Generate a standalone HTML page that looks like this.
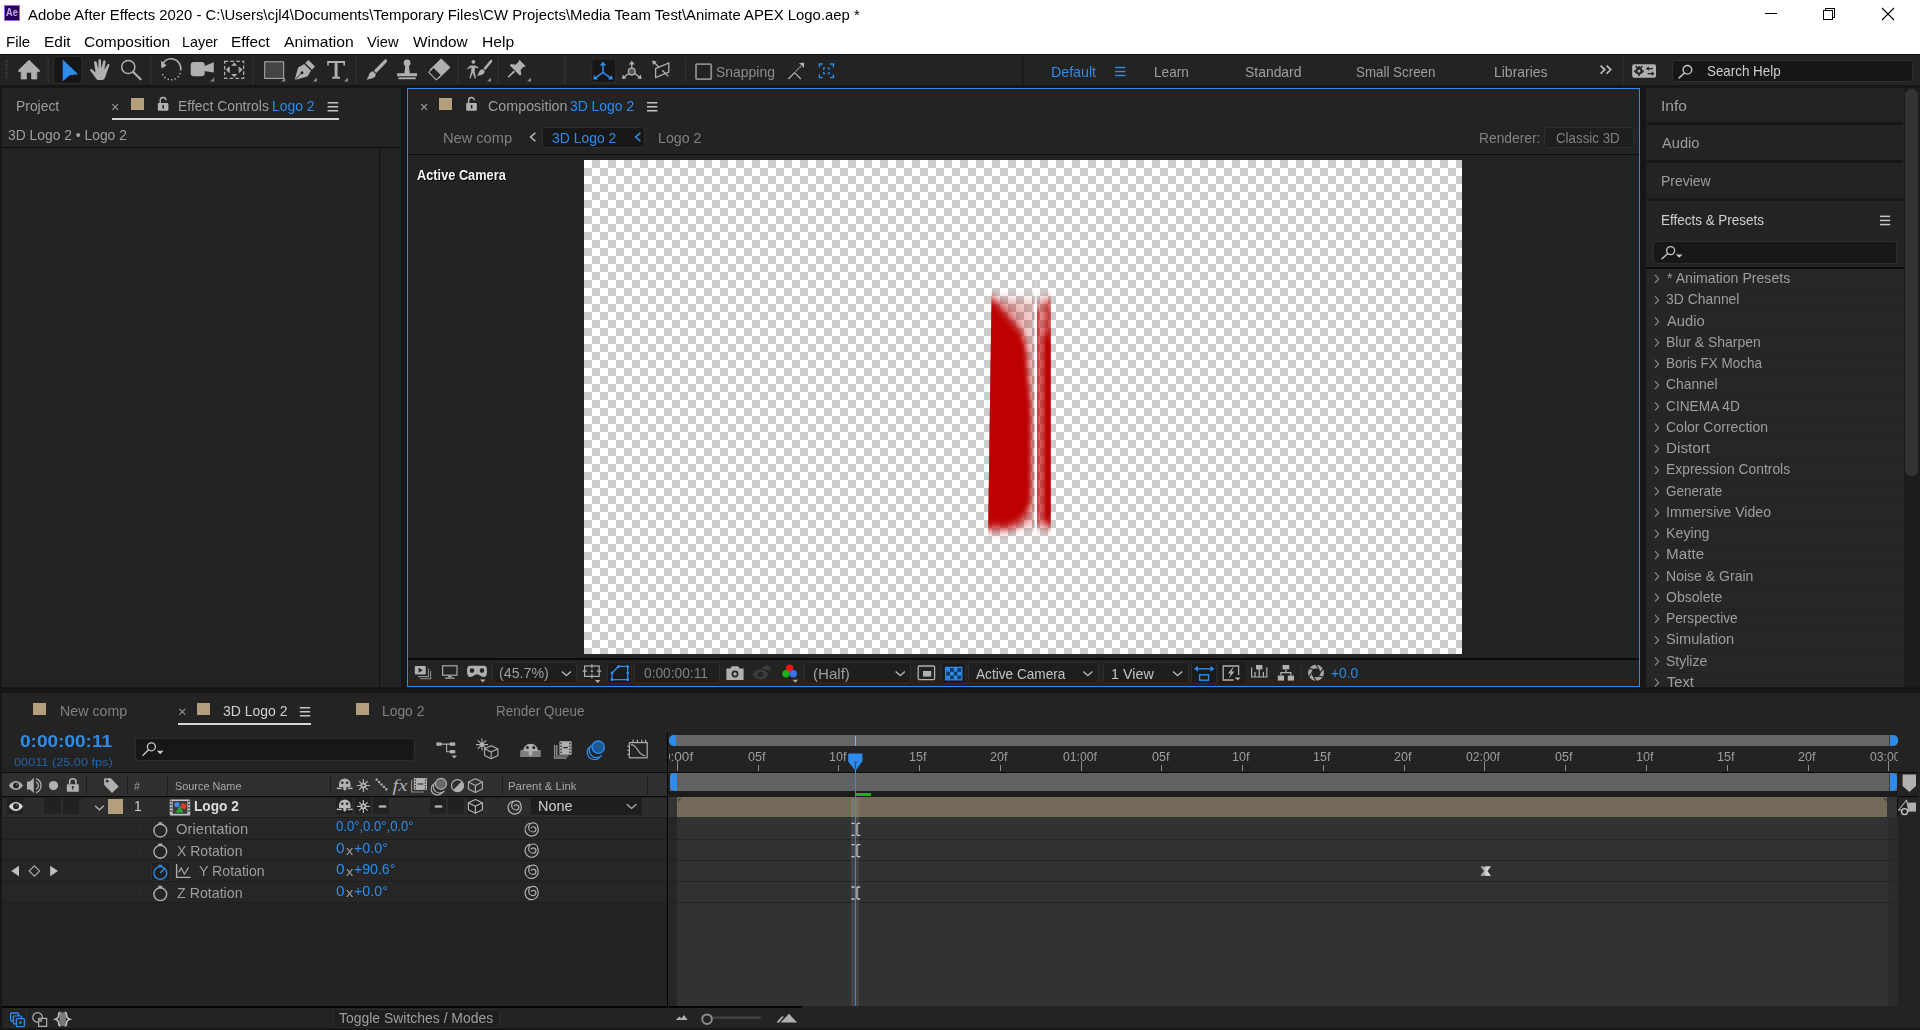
<!DOCTYPE html>
<html><head><meta charset="utf-8"><title>Adobe After Effects 2020</title>
<style>
html,body{margin:0;padding:0;}
body{width:1920px;height:1030px;overflow:hidden;background:#161616;font-family:"Liberation Sans",sans-serif;position:relative;}
#r div,#r span{position:absolute;box-sizing:border-box;}
#r{position:absolute;left:0;top:0;width:1920px;height:1030px;overflow:hidden;}
.t{white-space:nowrap;transform-origin:0 0;}
svg.ov{position:absolute;left:0;top:0;}
</style></head><body>
<div id="r">
<div style="left:0px;top:0px;width:1920px;height:54px;background:#ffffff;"></div>
<div style="left:0px;top:54px;width:1920px;height:1px;background:#101010;"></div>
<div style="left:4px;top:5.2px;width:16.3px;height:15.6px;background:#26084a;border:1px solid #9d62e6;"></div>
<span class="t" style="left:6.07px;top:7.80px;font-size:10.4px;line-height:10.4px;color:#cfa4ff;font-weight:bold;transform:scaleX(0.8864);">Ae</span>
<span class="t" style="left:27.50px;top:7.10px;font-size:15px;line-height:15px;color:#000;transform:scaleX(0.9917);">Adobe After Effects 2020 - C:\Users\cjl4\Documents\Temporary Files\CW Projects\Media Team Test\Animate APEX Logo.aep *</span>
<span class="t" style="left:6.30px;top:33.80px;font-size:15px;line-height:15px;color:#000;transform:scaleX(0.9989);">File</span>
<span class="t" style="left:43.51px;top:33.80px;font-size:15px;line-height:15px;color:#000;transform:scaleX(1.0296);">Edit</span>
<span class="t" style="left:83.62px;top:33.80px;font-size:15px;line-height:15px;color:#000;transform:scaleX(1.0337);">Composition</span>
<span class="t" style="left:182.35px;top:33.80px;font-size:15px;line-height:15px;color:#000;transform:scaleX(0.9563);">Layer</span>
<span class="t" style="left:231.08px;top:33.80px;font-size:15px;line-height:15px;color:#000;transform:scaleX(1.0204);">Effect</span>
<span class="t" style="left:284.40px;top:33.80px;font-size:15px;line-height:15px;color:#000;transform:scaleX(1.0441);">Animation</span>
<span class="t" style="left:367.43px;top:33.80px;font-size:15px;line-height:15px;color:#000;transform:scaleX(0.9790);">View</span>
<span class="t" style="left:413.42px;top:33.80px;font-size:15px;line-height:15px;color:#000;transform:scaleX(1.0220);">Window</span>
<span class="t" style="left:481.75px;top:33.80px;font-size:15px;line-height:15px;color:#000;transform:scaleX(1.0439);">Help</span>
<div style="left:0px;top:55px;width:1920px;height:30px;background:#232323;"></div>
<span class="t" style="left:715.67px;top:64.54px;font-size:14.6px;line-height:14.6px;color:#8c8c8c;transform:scaleX(0.9562);">Snapping</span>
<span class="t" style="left:1051.36px;top:64.64px;font-size:14.6px;line-height:14.6px;color:#2d8ceb;transform:scaleX(0.9740);">Default</span>
<span class="t" style="left:1153.61px;top:64.64px;font-size:14.6px;line-height:14.6px;color:#9e9e9e;transform:scaleX(0.9322);">Learn</span>
<span class="t" style="left:1245.17px;top:64.64px;font-size:14.6px;line-height:14.6px;color:#9e9e9e;transform:scaleX(0.9537);">Standard</span>
<span class="t" style="left:1356.10px;top:64.64px;font-size:14.6px;line-height:14.6px;color:#9e9e9e;transform:scaleX(0.9156);">Small Screen</span>
<span class="t" style="left:1493.58px;top:64.64px;font-size:14.6px;line-height:14.6px;color:#9e9e9e;transform:scaleX(0.9574);">Libraries</span>
<div style="left:1672px;top:59.6px;width:240.5px;height:22.2px;background:#161616;border:1px solid #2e2e2e;border-radius:3px;"></div>
<span class="t" style="left:1706.60px;top:64.34px;font-size:14.6px;line-height:14.6px;color:#cfcfcf;transform:scaleX(0.9170);">Search Help</span>
<div style="left:2px;top:88px;width:399px;height:599px;background:#232323;"></div>
<div style="left:2px;top:147px;width:398px;height:1px;background:#0c0c0c;"></div>
<div style="left:379px;top:148px;width:1px;height:539px;background:#121212;"></div>
<span class="t" style="left:16.39px;top:98.64px;font-size:14.6px;line-height:14.6px;color:#9e9e9e;transform:scaleX(0.9510);">Project</span>
<div style="left:131px;top:98px;width:12.5px;height:12px;background:#b39f7d;"></div>
<span class="t" style="left:177.89px;top:98.64px;font-size:14.6px;line-height:14.6px;color:#9e9e9e;transform:scaleX(0.9520);">Effect Controls</span>
<span class="t" style="left:272.19px;top:98.64px;font-size:14.6px;line-height:14.6px;color:#2d8ceb;transform:scaleX(0.9514);">Logo 2</span>
<div style="left:112px;top:118px;width:227px;height:2px;background:#d6d6d6;"></div>
<span class="t" style="left:7.75px;top:128.34px;font-size:14.6px;line-height:14.6px;color:#9e9e9e;transform:scaleX(0.9495);">3D Logo 2 • Logo 2</span>
<div style="left:407px;top:88px;width:1233px;height:599px;background:#232323;border:1px solid #2d8ceb;"></div>
<div style="left:408px;top:154px;width:1231px;height:1px;background:#0e0e0e;"></div>
<div style="left:408px;top:658px;width:1231px;height:1.5px;background:#0a0a0a;"></div>
<div style="left:439px;top:98px;width:13.3px;height:12px;background:#b39f7d;"></div>
<span class="t" style="left:487.98px;top:98.64px;font-size:14.6px;line-height:14.6px;color:#9e9e9e;transform:scaleX(0.9796);">Composition</span>
<span class="t" style="left:569.74px;top:98.64px;font-size:14.6px;line-height:14.6px;color:#2d8ceb;transform:scaleX(0.9521);">3D Logo 2</span>
<span class="t" style="left:442.53px;top:130.64px;font-size:14.6px;line-height:14.6px;color:#818181;transform:scaleX(1.0010);">New comp</span>
<div style="left:541.5px;top:126.5px;width:103.5px;height:21px;background:#171717;border:1px solid #2d2d2d;border-radius:3px;"></div>
<span class="t" style="left:551.74px;top:130.64px;font-size:14.6px;line-height:14.6px;color:#2d8ceb;transform:scaleX(0.9536);">3D Logo 2</span>
<span class="t" style="left:657.56px;top:130.64px;font-size:14.6px;line-height:14.6px;color:#818181;transform:scaleX(0.9725);">Logo 2</span>
<span class="t" style="left:1478.90px;top:131.44px;font-size:14.6px;line-height:14.6px;color:#818181;transform:scaleX(0.9453);">Renderer:</span>
<div style="left:1543.7px;top:127px;width:90.3px;height:20.6px;background:#1e1e1e;border:1px solid #2d2d2d;border-radius:3px;"></div>
<span class="t" style="left:1555.93px;top:131.44px;font-size:14.6px;line-height:14.6px;color:#818181;transform:scaleX(0.9132);">Classic 3D</span>
<div style="left:584px;top:160px;width:878px;height:494px;background-color:#fff;background-image:conic-gradient(#ccc 25%,#fff 0 50%,#ccc 0 75%,#fff 0);background-size:16px 16px;background-position:0 0;"></div>
<span class="t" style="left:417.18px;top:168.35px;font-size:14px;line-height:14px;color:#f4f4f4;font-weight:bold;transform:scaleX(0.9122);text-shadow:1px 1px 0 #000;">Active Camera</span>
<div style="left:491.5px;top:662px;width:85.5px;height:22px;background:#1e1e1e;border:1px solid #2c2c2c;border-radius:3px;"></div>
<span class="t" style="left:498.85px;top:665.64px;font-size:14.6px;line-height:14.6px;color:#9e9e9e;transform:scaleX(0.9737);">(45.7%)</span>
<div style="left:607px;top:662px;width:25.3px;height:22px;background:#1a1a1a;border:1px solid #2c2c2c;border-radius:3px;"></div>
<div style="left:634.4px;top:662px;width:86px;height:22px;background:#1e1e1e;border:1px solid #2c2c2c;border-radius:3px;"></div>
<span class="t" style="left:644.20px;top:665.64px;font-size:14.6px;line-height:14.6px;color:#818181;transform:scaleX(0.9415);">0:00:00:11</span>
<div style="left:804.4px;top:662px;width:107px;height:22px;background:#1e1e1e;border:1px solid #2c2c2c;border-radius:3px;"></div>
<span class="t" style="left:812.59px;top:667.14px;font-size:14.6px;line-height:14.6px;color:#9e9e9e;transform:scaleX(1.0333);">(Half)</span>
<div style="left:940.6px;top:662px;width:25.6px;height:22px;background:#1a1a1a;border:1px solid #2c2c2c;border-radius:3px;"></div>
<div style="left:967.75px;top:662px;width:131.3px;height:22px;background:#1e1e1e;border:1px solid #2c2c2c;border-radius:3px;"></div>
<span class="t" style="left:976.25px;top:667.24px;font-size:14.6px;line-height:14.6px;color:#c4c4c4;transform:scaleX(0.9336);">Active Camera</span>
<div style="left:1103px;top:662px;width:85.75px;height:22px;background:#1e1e1e;border:1px solid #2c2c2c;border-radius:3px;"></div>
<span class="t" style="left:1111.17px;top:667.24px;font-size:14.6px;line-height:14.6px;color:#c4c4c4;transform:scaleX(0.9827);">1 View</span>
<div style="left:1191px;top:662px;width:25.5px;height:22px;background:#1a1a1a;border:1px solid #2c2c2c;border-radius:3px;"></div>
<div style="left:1217.5px;top:662px;width:27px;height:22px;background:#1d1d1d;border-radius:3px;"></div>
<div style="left:1301px;top:663px;width:1px;height:20px;background:#2e2e2e;"></div>
<span class="t" style="left:1331.21px;top:665.64px;font-size:14.6px;line-height:14.6px;color:#2d8ceb;transform:scaleX(0.9459);">+0.0</span>
<div style="left:1646px;top:88px;width:258px;height:599px;background:#232323;"></div>
<div style="left:1647px;top:122px;width:256px;height:3px;background:#171717;"></div>
<div style="left:1647px;top:160px;width:256px;height:3px;background:#171717;"></div>
<div style="left:1647px;top:198px;width:256px;height:3px;background:#171717;"></div>
<span class="t" style="left:1660.80px;top:98.64px;font-size:14.6px;line-height:14.6px;color:#9e9e9e;transform:scaleX(1.0620);">Info</span>
<span class="t" style="left:1662.20px;top:136.24px;font-size:14.6px;line-height:14.6px;color:#9e9e9e;transform:scaleX(1.0022);">Audio</span>
<span class="t" style="left:1661.09px;top:174.44px;font-size:14.6px;line-height:14.6px;color:#9e9e9e;transform:scaleX(0.9546);">Preview</span>
<span class="t" style="left:1661.12px;top:212.64px;font-size:14.6px;line-height:14.6px;color:#d0d0d0;transform:scaleX(0.9226);">Effects &amp; Presets</span>
<div style="left:1652.8px;top:240.5px;width:244.6px;height:23px;background:#171717;border:1px solid #2d2d2d;border-radius:3px;"></div>
<div style="left:1646px;top:269px;width:258px;height:418px;background:#262626;"></div>
<div style="left:1646px;top:267px;width:258px;height:2px;background:#0c0c0c;"></div>
<div style="left:1646px;top:289px;width:258px;height:1px;background:#222222;"></div>
<span class="t" style="left:1666.79px;top:271.14px;font-size:14.6px;line-height:14.6px;color:#9e9e9e;transform:scaleX(0.9680);">* Animation Presets</span>
<div style="left:1646px;top:310px;width:258px;height:1px;background:#222222;"></div>
<span class="t" style="left:1666.44px;top:292.39px;font-size:14.6px;line-height:14.6px;color:#9e9e9e;transform:scaleX(0.9529);">3D Channel</span>
<div style="left:1646px;top:332px;width:258px;height:1px;background:#222222;"></div>
<span class="t" style="left:1667.00px;top:313.64px;font-size:14.6px;line-height:14.6px;color:#9e9e9e;transform:scaleX(1.0077);">Audio</span>
<div style="left:1646px;top:353px;width:258px;height:1px;background:#222222;"></div>
<span class="t" style="left:1665.88px;top:334.89px;font-size:14.6px;line-height:14.6px;color:#9e9e9e;transform:scaleX(0.9569);">Blur &amp; Sharpen</span>
<div style="left:1646px;top:374px;width:258px;height:1px;background:#222222;"></div>
<span class="t" style="left:1665.92px;top:356.14px;font-size:14.6px;line-height:14.6px;color:#9e9e9e;transform:scaleX(0.9236);">Boris FX Mocha</span>
<div style="left:1646px;top:396px;width:258px;height:1px;background:#222222;"></div>
<span class="t" style="left:1666.31px;top:377.39px;font-size:14.6px;line-height:14.6px;color:#9e9e9e;transform:scaleX(0.9487);">Channel</span>
<div style="left:1646px;top:417px;width:258px;height:1px;background:#222222;"></div>
<span class="t" style="left:1666.31px;top:398.64px;font-size:14.6px;line-height:14.6px;color:#9e9e9e;transform:scaleX(0.9391);">CINEMA 4D</span>
<div style="left:1646px;top:438px;width:258px;height:1px;background:#222222;"></div>
<span class="t" style="left:1666.30px;top:419.89px;font-size:14.6px;line-height:14.6px;color:#9e9e9e;transform:scaleX(0.9598);">Color Correction</span>
<div style="left:1646px;top:459px;width:258px;height:1px;background:#222222;"></div>
<span class="t" style="left:1665.78px;top:441.14px;font-size:14.6px;line-height:14.6px;color:#9e9e9e;transform:scaleX(1.0445);">Distort</span>
<div style="left:1646px;top:480px;width:258px;height:1px;background:#222222;"></div>
<span class="t" style="left:1665.89px;top:462.39px;font-size:14.6px;line-height:14.6px;color:#9e9e9e;transform:scaleX(0.9505);">Expression Controls</span>
<div style="left:1646px;top:502px;width:258px;height:1px;background:#222222;"></div>
<span class="t" style="left:1666.33px;top:483.64px;font-size:14.6px;line-height:14.6px;color:#9e9e9e;transform:scaleX(0.9244);">Generate</span>
<div style="left:1646px;top:523px;width:258px;height:1px;background:#222222;"></div>
<span class="t" style="left:1665.73px;top:504.89px;font-size:14.6px;line-height:14.6px;color:#9e9e9e;transform:scaleX(0.9692);">Immersive Video</span>
<div style="left:1646px;top:544px;width:258px;height:1px;background:#222222;"></div>
<span class="t" style="left:1665.86px;top:526.14px;font-size:14.6px;line-height:14.6px;color:#9e9e9e;transform:scaleX(0.9744);">Keying</span>
<div style="left:1646px;top:566px;width:258px;height:1px;background:#222222;"></div>
<span class="t" style="left:1665.78px;top:547.39px;font-size:14.6px;line-height:14.6px;color:#9e9e9e;transform:scaleX(1.0440);">Matte</span>
<div style="left:1646px;top:587px;width:258px;height:1px;background:#222222;"></div>
<span class="t" style="left:1665.88px;top:568.64px;font-size:14.6px;line-height:14.6px;color:#9e9e9e;transform:scaleX(0.9621);">Noise &amp; Grain</span>
<div style="left:1646px;top:608px;width:258px;height:1px;background:#222222;"></div>
<span class="t" style="left:1666.37px;top:589.89px;font-size:14.6px;line-height:14.6px;color:#9e9e9e;transform:scaleX(0.9635);">Obsolete</span>
<div style="left:1646px;top:629px;width:258px;height:1px;background:#222222;"></div>
<span class="t" style="left:1665.90px;top:611.14px;font-size:14.6px;line-height:14.6px;color:#9e9e9e;transform:scaleX(0.9401);">Perspective</span>
<div style="left:1646px;top:650px;width:258px;height:1px;background:#222222;"></div>
<span class="t" style="left:1666.34px;top:632.39px;font-size:14.6px;line-height:14.6px;color:#9e9e9e;transform:scaleX(1.0004);">Simulation</span>
<div style="left:1646px;top:672px;width:258px;height:1px;background:#222222;"></div>
<span class="t" style="left:1666.37px;top:653.64px;font-size:14.6px;line-height:14.6px;color:#9e9e9e;transform:scaleX(0.9596);">Stylize</span>
<span class="t" style="left:1666.71px;top:674.89px;font-size:14.6px;line-height:14.6px;color:#9e9e9e;transform:scaleX(1.0018);">Text</span>
<div style="left:1904px;top:88px;width:16px;height:599px;background:#1c1c1c;"></div>
<div style="left:0px;top:687px;width:1920px;height:6px;background:#161616;"></div>
<div style="left:2px;top:693px;width:1918px;height:335px;background:#232323;"></div>
<div style="left:33px;top:703px;width:13.3px;height:12px;background:#b39f7d;"></div>
<span class="t" style="left:59.86px;top:703.64px;font-size:14.6px;line-height:14.6px;color:#818181;transform:scaleX(0.9757);">New comp</span>
<div style="left:197px;top:703px;width:13.3px;height:12px;background:#b39f7d;"></div>
<span class="t" style="left:223.44px;top:703.64px;font-size:14.6px;line-height:14.6px;color:#d0d0d0;transform:scaleX(0.9566);">3D Logo 2</span>
<div style="left:356px;top:703px;width:12.5px;height:12px;background:#b39f7d;"></div>
<span class="t" style="left:382.29px;top:703.64px;font-size:14.6px;line-height:14.6px;color:#818181;transform:scaleX(0.9491);">Logo 2</span>
<span class="t" style="left:496.12px;top:703.64px;font-size:14.6px;line-height:14.6px;color:#818181;transform:scaleX(0.9239);">Render Queue</span>
<div style="left:178px;top:723px;width:133px;height:2px;background:#d6d6d6;"></div>
<span class="t" style="left:19.64px;top:733.12px;font-size:16.4px;line-height:16.4px;color:#2d8ceb;font-weight:bold;transform:scaleX(1.1607);">0:00:00:11</span>
<span class="t" style="left:14.49px;top:755.78px;font-size:11.6px;line-height:11.6px;color:#1f64ad;transform:scaleX(1.0962);">00011 (25.00 fps)</span>
<div style="left:134.6px;top:737.6px;width:280px;height:23.6px;background:#171717;border:1px solid #2d2d2d;border-radius:3px;"></div>
<div style="left:2px;top:771.5px;width:1916px;height:1.6px;background:#0c0c0c;"></div>
<div style="left:2px;top:773px;width:665px;height:23px;background:#2f2f2f;"></div>
<div style="left:2px;top:796px;width:1916px;height:1.3px;background:#080808;"></div>
<div style="left:86.4px;top:776px;width:1px;height:18px;background:#1b1b1b;"></div>
<div style="left:126.6px;top:776px;width:1px;height:18px;background:#1b1b1b;"></div>
<div style="left:167.3px;top:776px;width:1px;height:18px;background:#1b1b1b;"></div>
<div style="left:329.8px;top:776px;width:1px;height:18px;background:#1b1b1b;"></div>
<div style="left:501.5px;top:776px;width:1px;height:18px;background:#1b1b1b;"></div>
<div style="left:647.2px;top:776px;width:1px;height:18px;background:#1b1b1b;"></div>
<span class="t" style="left:134.15px;top:780.61px;font-size:10.5px;line-height:10.5px;color:#9e9e9e;transform:scaleX(1.0135);">#</span>
<span class="t" style="left:174.51px;top:779.78px;font-size:11.6px;line-height:11.6px;color:#a8a8a8;transform:scaleX(0.9372);">Source Name</span>
<span class="t" style="left:508.49px;top:779.98px;font-size:11.6px;line-height:11.6px;color:#a8a8a8;transform:scaleX(0.9836);">Parent &amp; Link</span>
<div style="left:2px;top:797.5px;width:665px;height:19.7px;background:#2c2c2c;"></div>
<div style="left:7px;top:798px;width:16px;height:16.2px;background:#212121;"></div>
<div style="left:44.3px;top:798px;width:16.7px;height:16.2px;background:#212121;"></div>
<div style="left:63.4px;top:798px;width:16px;height:16.2px;background:#212121;"></div>
<div style="left:336px;top:798px;width:16px;height:16.2px;background:#212121;"></div>
<div style="left:354.7px;top:798px;width:16px;height:16.2px;background:#212121;"></div>
<div style="left:373.4px;top:798px;width:16px;height:16.2px;background:#212121;"></div>
<div style="left:429.7px;top:798px;width:16px;height:16.2px;background:#212121;"></div>
<div style="left:448.4px;top:798px;width:16px;height:16.2px;background:#212121;"></div>
<div style="left:467px;top:798px;width:16px;height:16.2px;background:#212121;"></div>
<div style="left:108px;top:799.2px;width:15.4px;height:14.8px;background:#b39f7d;"></div>
<span class="t" style="left:133.97px;top:798.94px;font-size:14.6px;line-height:14.6px;color:#d0d0d0;transform:scaleX(0.9447);">1</span>
<span class="t" style="left:194.41px;top:799.24px;font-size:14.6px;line-height:14.6px;color:#dcdcdc;font-weight:bold;transform:scaleX(0.9377);">Logo 2</span>
<div style="left:531px;top:798px;width:111px;height:16.8px;background:#1e1e1e;"></div>
<span class="t" style="left:538.24px;top:799.24px;font-size:14.6px;line-height:14.6px;color:#d0d0d0;transform:scaleX(0.9919);">None</span>
<div style="left:2px;top:817px;width:665px;height:85.5px;background:#262626;"></div>
<div style="left:2px;top:817.2px;width:665px;height:1px;background:#1e1e1e;"></div>
<div style="left:2px;top:838.5px;width:665px;height:1px;background:#1e1e1e;"></div>
<div style="left:2px;top:859.7px;width:665px;height:1px;background:#1e1e1e;"></div>
<div style="left:2px;top:881px;width:665px;height:1px;background:#1e1e1e;"></div>
<div style="left:2px;top:902.2px;width:665px;height:1px;background:#1e1e1e;"></div>
<div style="left:151.4px;top:861px;width:19.6px;height:19.5px;background:#202020;border:1px solid #303030;"></div>
<span class="t" style="left:176.34px;top:822.24px;font-size:14.6px;line-height:14.6px;color:#9e9e9e;transform:scaleX(1.0116);">Orientation</span>
<span class="t" style="left:176.65px;top:843.54px;font-size:14.6px;line-height:14.6px;color:#9e9e9e;transform:scaleX(0.9601);">X Rotation</span>
<span class="t" style="left:199.40px;top:864.44px;font-size:14.6px;line-height:14.6px;color:#9e9e9e;transform:scaleX(0.9681);">Y Rotation</span>
<span class="t" style="left:176.57px;top:886.04px;font-size:14.6px;line-height:14.6px;color:#9e9e9e;transform:scaleX(0.9739);">Z Rotation</span>
<span class="t" style="left:336.38px;top:819.44px;font-size:14.6px;line-height:14.6px;color:#2d8ceb;transform:scaleX(0.8972);">0.0°,0.0°,0.0°</span>
<span class="t" style="left:336.28px;top:841.44px;font-size:14.6px;line-height:14.6px;color:#2d8ceb;transform:scaleX(1.0559);">0</span>
<span class="t" style="left:346.45px;top:844.00px;font-size:13px;line-height:13px;color:#9e9e9e;transform:scaleX(1.1218);">x</span>
<span class="t" style="left:353.88px;top:841.44px;font-size:14.6px;line-height:14.6px;color:#2d8ceb;transform:scaleX(0.9798);">+0.0°</span>
<span class="t" style="left:336.28px;top:862.44px;font-size:14.6px;line-height:14.6px;color:#2d8ceb;transform:scaleX(1.0559);">0</span>
<span class="t" style="left:346.45px;top:865.00px;font-size:13px;line-height:13px;color:#9e9e9e;transform:scaleX(1.1218);">x</span>
<span class="t" style="left:353.89px;top:862.44px;font-size:14.6px;line-height:14.6px;color:#2d8ceb;transform:scaleX(0.9667);">+90.6°</span>
<span class="t" style="left:336.28px;top:883.64px;font-size:14.6px;line-height:14.6px;color:#2d8ceb;transform:scaleX(1.0559);">0</span>
<span class="t" style="left:346.45px;top:886.20px;font-size:13px;line-height:13px;color:#9e9e9e;transform:scaleX(1.1218);">x</span>
<span class="t" style="left:353.88px;top:883.64px;font-size:14.6px;line-height:14.6px;color:#2d8ceb;transform:scaleX(0.9798);">+0.0°</span>
<div style="left:667px;top:732px;width:1px;height:275px;background:#050505;"></div>
<div style="left:2px;top:1006.4px;width:800px;height:1.5px;background:#060606;"></div>
<div style="left:0px;top:1028px;width:1920px;height:2px;background:#161616;"></div>
<div style="left:332.5px;top:1008.5px;width:167.5px;height:19px;background:#1e1e1e;border:1px solid #2c2c2c;border-radius:3px;"></div>
<span class="t" style="left:338.72px;top:1011.44px;font-size:14.6px;line-height:14.6px;color:#9e9e9e;transform:scaleX(0.9554);">Toggle Switches / Modes</span>
<div style="left:668px;top:817px;width:1220px;height:189px;background:#323232;"></div>
<div style="left:1888px;top:817px;width:10px;height:189px;background:#2c2c2c;"></div>
<div style="left:668px;top:817px;width:9.3px;height:189px;background:#262626;"></div>
<div style="left:668px;top:838.5px;width:1230px;height:1px;background:#242424;"></div>
<div style="left:668px;top:859.7px;width:1230px;height:1px;background:#242424;"></div>
<div style="left:668px;top:881px;width:1230px;height:1px;background:#242424;"></div>
<div style="left:668px;top:902.2px;width:1230px;height:1px;background:#242424;"></div>
<div style="left:669px;top:735.2px;width:1228.5px;height:10.8px;background:#676767;border-radius:5px;overflow:hidden;"></div>
<div style="left:669px;top:735.2px;width:7.4px;height:10.8px;background:#2d8ceb;border-radius:5px 0 0 5px;"></div>
<div style="left:1888.8px;top:735.2px;width:1.2px;height:10.8px;background:#3c3c3c;"></div>
<div style="left:1890px;top:735.2px;width:7.5px;height:10.8px;background:#2d8ceb;border-radius:0 5px 5px 0;"></div>
<div style="left:854.8px;top:736px;width:1.2px;height:9.5px;background:#7fb2ea;"></div>
<div style="left:668.5px;top:746px;width:1229px;height:25.5px;overflow:hidden;">
<span class="t" style="left:-6.00px;top:4.13px;font-size:13.2px;line-height:13.2px;color:#9e9e9e;transform:scaleX(1.0288);">0:00f</span>
<div style="left:8.30px;top:15px;width:1px;height:10px;background:#8a8a8a;"></div>
<span class="t" style="left:79.26px;top:4.13px;font-size:13.2px;line-height:13.2px;color:#9e9e9e;transform:scaleX(0.9538);">05f</span>
<div style="left:89.06px;top:19px;width:1px;height:6px;background:#8a8a8a;"></div>
<span class="t" style="left:160.03px;top:4.13px;font-size:13.2px;line-height:13.2px;color:#9e9e9e;transform:scaleX(0.9538);">10f</span>
<div style="left:169.83px;top:19px;width:1px;height:6px;background:#8a8a8a;"></div>
<span class="t" style="left:240.79px;top:4.13px;font-size:13.2px;line-height:13.2px;color:#9e9e9e;transform:scaleX(0.9538);">15f</span>
<div style="left:250.59px;top:19px;width:1px;height:6px;background:#8a8a8a;"></div>
<span class="t" style="left:321.56px;top:4.13px;font-size:13.2px;line-height:13.2px;color:#9e9e9e;transform:scaleX(0.9538);">20f</span>
<div style="left:331.36px;top:19px;width:1px;height:6px;background:#8a8a8a;"></div>
<span class="t" style="left:394.12px;top:4.13px;font-size:13.2px;line-height:13.2px;color:#9e9e9e;transform:scaleX(0.9238);">01:00f</span>
<div style="left:412.12px;top:15px;width:1px;height:10px;background:#8a8a8a;"></div>
<span class="t" style="left:483.09px;top:4.13px;font-size:13.2px;line-height:13.2px;color:#9e9e9e;transform:scaleX(0.9538);">05f</span>
<div style="left:492.89px;top:19px;width:1px;height:6px;background:#8a8a8a;"></div>
<span class="t" style="left:563.85px;top:4.13px;font-size:13.2px;line-height:13.2px;color:#9e9e9e;transform:scaleX(0.9538);">10f</span>
<div style="left:573.65px;top:19px;width:1px;height:6px;background:#8a8a8a;"></div>
<span class="t" style="left:644.62px;top:4.13px;font-size:13.2px;line-height:13.2px;color:#9e9e9e;transform:scaleX(0.9538);">15f</span>
<div style="left:654.42px;top:19px;width:1px;height:6px;background:#8a8a8a;"></div>
<span class="t" style="left:725.38px;top:4.13px;font-size:13.2px;line-height:13.2px;color:#9e9e9e;transform:scaleX(0.9538);">20f</span>
<div style="left:735.18px;top:19px;width:1px;height:6px;background:#8a8a8a;"></div>
<span class="t" style="left:797.95px;top:4.13px;font-size:13.2px;line-height:13.2px;color:#9e9e9e;transform:scaleX(0.9238);">02:00f</span>
<div style="left:815.95px;top:15px;width:1px;height:10px;background:#8a8a8a;"></div>
<span class="t" style="left:886.91px;top:4.13px;font-size:13.2px;line-height:13.2px;color:#9e9e9e;transform:scaleX(0.9538);">05f</span>
<div style="left:896.71px;top:19px;width:1px;height:6px;background:#8a8a8a;"></div>
<span class="t" style="left:967.68px;top:4.13px;font-size:13.2px;line-height:13.2px;color:#9e9e9e;transform:scaleX(0.9538);">10f</span>
<div style="left:977.48px;top:19px;width:1px;height:6px;background:#8a8a8a;"></div>
<span class="t" style="left:1048.44px;top:4.13px;font-size:13.2px;line-height:13.2px;color:#9e9e9e;transform:scaleX(0.9538);">15f</span>
<div style="left:1058.24px;top:19px;width:1px;height:6px;background:#8a8a8a;"></div>
<span class="t" style="left:1129.21px;top:4.13px;font-size:13.2px;line-height:13.2px;color:#9e9e9e;transform:scaleX(0.9538);">20f</span>
<div style="left:1139.01px;top:19px;width:1px;height:6px;background:#8a8a8a;"></div>
<span class="t" style="left:1201.77px;top:4.13px;font-size:13.2px;line-height:13.2px;color:#9e9e9e;transform:scaleX(0.9238);">03:00f</span>
<div style="left:1219.77px;top:15px;width:1px;height:10px;background:#8a8a8a;"></div>
</div>
<div style="left:669.5px;top:772.8px;width:1227.5px;height:18.2px;background:#626262;"></div>
<div style="left:669.8px;top:772.8px;width:7.4px;height:18.2px;background:#2d8ceb;border-radius:5px 0 0 5px;"></div>
<div style="left:1888.6px;top:772.8px;width:1.2px;height:18.2px;background:#3a3a3a;"></div>
<div style="left:1889.8px;top:772.8px;width:7.4px;height:18.6px;background:#2d8ceb;border-radius:0 5px 5px 0;"></div>
<div style="left:668px;top:791px;width:1230px;height:5.5px;background:#1c1c1c;"></div>
<div style="left:855px;top:793px;width:16px;height:3px;background:#1cb01c;"></div>
<div style="left:668px;top:797.2px;width:1229px;height:20px;background:#333333;"></div>
<div style="left:677.3px;top:797.2px;width:1210.2px;height:19.6px;background:#736a5a;"></div>
<div style="left:1897px;top:797.5px;width:1px;height:19.7px;background:#0a0a0a;"></div>
<div style="left:851.2px;top:797.5px;width:7.4px;height:208.5px;background:rgba(255,255,255,0.085);"></div>
<div style="left:854.6px;top:770px;width:1.7px;height:236px;background:#2d8ceb;"></div>
<svg class="ov" width="1920" height="1030" viewBox="0 0 1920 1030">
<g stroke="#000" stroke-width="1" fill="none" shape-rendering="crispEdges"><path d="M1765 13.5H1777"/><rect x="1823.5" y="10.5" width="9" height="9"/><path d="M1825.5 10.5V8.5H1834.5V17.5H1832.5"/></g>
<g stroke="#000" stroke-width="1.1" fill="none"><path d="M1882 8L1894 20M1894 8L1882 20"/></g>
<path d="M1655 274.90L1658.6 278.90L1655 282.90" stroke="#8c8c8c" stroke-width="1.2" fill="none"/>
<path d="M1655 296.15L1658.6 300.15L1655 304.15" stroke="#8c8c8c" stroke-width="1.2" fill="none"/>
<path d="M1655 317.40L1658.6 321.40L1655 325.40" stroke="#8c8c8c" stroke-width="1.2" fill="none"/>
<path d="M1655 338.65L1658.6 342.65L1655 346.65" stroke="#8c8c8c" stroke-width="1.2" fill="none"/>
<path d="M1655 359.90L1658.6 363.90L1655 367.90" stroke="#8c8c8c" stroke-width="1.2" fill="none"/>
<path d="M1655 381.15L1658.6 385.15L1655 389.15" stroke="#8c8c8c" stroke-width="1.2" fill="none"/>
<path d="M1655 402.40L1658.6 406.40L1655 410.40" stroke="#8c8c8c" stroke-width="1.2" fill="none"/>
<path d="M1655 423.65L1658.6 427.65L1655 431.65" stroke="#8c8c8c" stroke-width="1.2" fill="none"/>
<path d="M1655 444.90L1658.6 448.90L1655 452.90" stroke="#8c8c8c" stroke-width="1.2" fill="none"/>
<path d="M1655 466.15L1658.6 470.15L1655 474.15" stroke="#8c8c8c" stroke-width="1.2" fill="none"/>
<path d="M1655 487.40L1658.6 491.40L1655 495.40" stroke="#8c8c8c" stroke-width="1.2" fill="none"/>
<path d="M1655 508.65L1658.6 512.65L1655 516.65" stroke="#8c8c8c" stroke-width="1.2" fill="none"/>
<path d="M1655 529.90L1658.6 533.90L1655 537.90" stroke="#8c8c8c" stroke-width="1.2" fill="none"/>
<path d="M1655 551.15L1658.6 555.15L1655 559.15" stroke="#8c8c8c" stroke-width="1.2" fill="none"/>
<path d="M1655 572.40L1658.6 576.40L1655 580.40" stroke="#8c8c8c" stroke-width="1.2" fill="none"/>
<path d="M1655 593.65L1658.6 597.65L1655 601.65" stroke="#8c8c8c" stroke-width="1.2" fill="none"/>
<path d="M1655 614.90L1658.6 618.90L1655 622.90" stroke="#8c8c8c" stroke-width="1.2" fill="none"/>
<path d="M1655 636.15L1658.6 640.15L1655 644.15" stroke="#8c8c8c" stroke-width="1.2" fill="none"/>
<path d="M1655 657.40L1658.6 661.40L1655 665.40" stroke="#8c8c8c" stroke-width="1.2" fill="none"/>
<path d="M1655 678.65L1658.6 682.65L1655 686.65" stroke="#8c8c8c" stroke-width="1.2" fill="none"/>
<path d="M1905 93.4 L1909.2 89 L1913.8 89 L1918.2 93.4 L1918.2 470.4 C1917.6 473.4 1915.4 475.8 1912.4 475.8 L1910.8 475.8 C1907.8 475.8 1905.6 473.4 1905 470.4 Z" fill="#333333"/>
<!-- ================= TOOLBAR ================= -->
<g fill="#b0b0b0" stroke="none">
<!-- grip -->
<g fill="#3c3c3c"><rect x="5" y="60" width="3.2" height="1"/><rect x="5" y="62" width="3.2" height="1"/><rect x="5" y="64" width="3.2" height="1"/><rect x="5" y="66" width="3.2" height="1"/><rect x="5" y="68" width="3.2" height="1"/><rect x="5" y="70" width="3.2" height="1"/><rect x="5" y="72" width="3.2" height="1"/><rect x="5" y="74" width="3.2" height="1"/><rect x="5" y="76" width="3.2" height="1"/><rect x="5" y="78" width="3.2" height="1"/></g>
<!-- separators -->
<g fill="#303030"><rect x="47.5" y="57" width="1.5" height="26"/><rect x="150" y="57" width="1.5" height="26"/><rect x="252.5" y="57" width="1.5" height="26"/><rect x="355" y="57" width="1.5" height="26"/><rect x="457.5" y="57" width="1.5" height="26"/><rect x="497.5" y="57" width="1.5" height="26"/><rect x="685" y="58" width="1.2" height="23"/></g>
<rect x="563.5" y="55" width="2.5" height="30" fill="#2c2c2c"/>
<rect x="1022" y="55" width="1.5" height="30" fill="#191919"/>
<rect x="1623" y="55" width="1.5" height="30" fill="#2c2c2c"/>
<!-- home -->
<path d="M29 60.2 L39.4 70.2 L39.4 71.6 L36.8 71.6 L36.8 79 L31.6 79 L31.6 72.3 L26.4 72.3 L26.4 79 L21.2 79 L21.2 71.6 L18.6 71.6 L18.6 70.2 Z" stroke="#b0b0b0" stroke-width="0.8" stroke-linejoin="round"/>
<!-- selected arrow button -->
<rect x="53.8" y="56.3" width="28.2" height="27" rx="3" fill="#161616" stroke="#2f2f2f" stroke-width="1"/>
<path d="M62.7 59.5 L78.2 74.3 L69.8 75.3 L62.7 81.2 Z" fill="#2d8ceb"/>
<!-- hand -->
<path d="M97.6 80 C95.5 78.4 92.6 73.4 90.2 70.6 C89.6 69.6 91 68.6 92.2 69.4 L95.6 72.6 L94 62.6 C93.8 61 96.2 60.6 96.6 62.2 L98.4 69 L98.4 60.4 C98.4 58.8 101 58.8 101 60.4 L101.4 68.8 L103.2 61.2 C103.6 59.8 105.8 60.2 105.6 61.8 L104.4 69.8 L107.4 64.6 C108.2 63.4 110 64.2 109.4 65.6 C107.8 69.4 106.6 73.2 105.4 76.6 C104.8 78.4 103.8 80 102.6 80 Z"/>
<!-- zoom -->
<circle cx="128.3" cy="67" r="6.6" fill="none" stroke="#b0b0b0" stroke-width="1.5"/>
<path d="M133 71.8 L140.6 79.2" stroke="#b0b0b0" stroke-width="2.2" stroke-linecap="round"/>
<!-- rotate -->
<path d="M161.6 66.5 A9.6 9.6 0 0 1 180.6 70.5" fill="none" stroke="#b0b0b0" stroke-width="1.6"/>
<path d="M161 60.4 L166.6 65.4 L161.6 68.4 Z"/>
<path d="M180.4 73 A9.6 9.6 0 0 1 162 73" fill="none" stroke="#b0b0b0" stroke-width="1.5" stroke-dasharray="1.4 2.2"/>
<!-- camera -->
<rect x="190.7" y="62" width="14" height="14.2" rx="3"/>
<path d="M203.5 66.5 L213.8 62.2 L213.8 72.6 L203.5 71 Z"/>
<path d="M214.2 77.6 L214.2 81.4 L210.2 81.4 Z" fill="#8a8a8a"/>
<!-- pan behind -->
<rect x="224.6" y="61.3" width="19" height="17" fill="none" stroke="#b0b0b0" stroke-width="1.3" stroke-dasharray="3.6 2.2"/>
<path d="M234.2 62.6 L237.2 65.8 L231.2 65.8 Z M234.2 77.2 L237.2 74 L231.2 74 Z M225.8 69.8 L229 66.8 L229 72.8 Z M242.6 69.8 L239.4 66.8 L239.4 72.8 Z"/>
<rect x="228.8" y="66.8" width="1" height="6"/><rect x="238.6" y="66.8" width="1" height="6"/>
<!-- rectangle -->
<rect x="264.7" y="61.8" width="19" height="16.6" fill="#444" stroke="#b0b0b0" stroke-width="1"/>
<path d="M285.2 77.6 L285.2 81.4 L281.2 81.4 Z" fill="#8a8a8a"/>
<!-- pen -->
<path d="M308.4 60 L315 66.6 L312 69.8 L305.2 63 Z"/>
<path d="M304.2 64 L311 70.8 L307.4 76.6 L295.6 79.8 L294.8 79 L298.2 67.4 Z M302 71.2 a1.5 1.5 0 1 0 0.01 0 Z" fill-rule="evenodd"/>
<path d="M295.4 79.2 L301.6 73" stroke="#232323" stroke-width="0.9"/>
<path d="M317 77.6 L317 81.4 L313 81.4 Z" fill="#8a8a8a"/>
<!-- T -->
<path d="M327.2 61 L345 61 L345 65.6 L343.4 65.6 L343.4 63 L337.6 63 L337.6 76.8 L340 76.8 L340 78.8 L332.2 78.8 L332.2 76.8 L334.6 76.8 L334.6 63 L328.8 63 L328.8 65.6 L327.2 65.6 Z"/>
<path d="M348 77.6 L348 81.4 L344 81.4 Z" fill="#8a8a8a"/>
<!-- brush -->
<path d="M386.4 59.4 C387.4 60 387 61.6 386.2 62.8 L376.2 73 L374 70.6 L384 60.2 C384.8 59.4 385.8 59 386.4 59.4 Z"/>
<path d="M373.4 71.4 L375.6 73.8 C376.4 76.4 373.6 79.4 366.2 79.4 C368.6 77.8 368.4 75.6 369.4 73.8 C370.2 72.2 372 71.2 373.4 71.4 Z"/>
<!-- stamp -->
<circle cx="407.1" cy="63" r="3.4"/>
<path d="M405.4 65 L408.8 65 L409.8 73.2 L417 73.2 L417 76.2 L397.2 76.2 L397.2 73.2 L404.4 73.2 Z"/>
<rect x="398.4" y="77.4" width="17.4" height="1.8"/>
<!-- eraser -->
<path d="M441.2 59 L450 67.4 L438.8 78.2 L430 69.8 Z" stroke="#b0b0b0" stroke-width="1" stroke-linejoin="round"/>
<path d="M433.6 67.2 L441.6 75 L436.2 79.8 L428.8 72.4 Z" fill="#232323" stroke="#b0b0b0" stroke-width="1.1" stroke-linejoin="round"/>
<!-- roto brush -->
<circle cx="473.4" cy="61.8" r="1.9"/>
<path d="M467.2 68.4 L470.2 65.6 L475.4 65.6 L478.6 67.6 L478.2 68.6 L475.2 67.6 L474.6 71.6 L476 78.2 L474.8 78.6 L472.6 72.8 L470.6 78.6 L469.4 78.2 L471.2 71.4 L471.4 67.2 L468 69.2 Z"/>
<path d="M491.8 60 C492.6 60.6 492.2 61.8 491.6 62.6 L485.2 70.2 L483.4 68.6 L489.8 60.8 C490.4 60.1 491.2 59.6 491.8 60 Z"/>
<path d="M482.8 69.2 L484.6 71 C485 73.2 482.6 75.6 476.6 75.8 C478.6 74.4 478.6 72.6 479.4 71.2 C480.2 69.8 481.6 69 482.8 69.2 Z"/>
<path d="M491 77.6 L491 81.4 L487 81.4 Z" fill="#8a8a8a"/>
<!-- pin -->
<path d="M519.4 59.8 L525.8 66.2 L523.4 67 L520.6 69.8 L521.4 74.6 L519.8 75.6 L509.8 65.6 L510.8 64 L515.6 64.8 L518.4 62 Z"/>
<path d="M513.6 70.6 L515 72 L508.6 77.8 L507.6 76.8 Z"/>
<path d="M531 77.6 L531 81.4 L527 81.4 Z" fill="#8a8a8a"/>
<!-- axis mode selected -->
<rect x="591.8" y="58.8" width="24" height="24" rx="3" fill="#161616" stroke="#2f2f2f" stroke-width="1"/>
<g stroke="#2d8ceb" stroke-width="1.5" fill="none"><path d="M603 72.4 L603 64 M603 72.4 L595.6 77.8 M603 72.4 L610.4 77.8"/></g>
<path d="M603 61.6 L606.2 65.4 L599.8 65.4 Z M593.2 79.6 L594.2 75 L598 79.4 Z M612.8 79.6 L611.8 75 L608 79.4 Z" fill="#2d8ceb"/>
<!-- axis mode 2 -->
<g stroke="#b0b0b0" stroke-width="1.3" fill="none"><path d="M631.8 68 L631.8 63.6 M628.8 73.6 L624.4 76.8 M634.8 73.6 L639.2 76.8"/><circle cx="631.8" cy="71.6" r="3.4" fill="#555"/></g>
<path d="M631.8 60.8 L634.8 64.6 L628.8 64.6 Z M622 79 L622.8 74.6 L626.4 78.6 Z M641.6 79 L640.8 74.6 L637.2 78.6 Z"/>
<!-- axis mode 3 -->
<g stroke="#b0b0b0" stroke-width="1.3" fill="none"><path d="M655.6 68.6 L668.8 63 L668.8 72 L655.6 77.6 Z"/><path d="M653.4 61.8 L659 67.2 M662.2 70.2 L668.4 76.4"/></g>
<path d="M652.2 60.6 L656.6 61.4 L653 65 Z"/>
<!-- snapping checkbox -->
<rect x="696" y="64.2" width="15.2" height="15" rx="1" fill="none" stroke="#8c8c8c" stroke-width="1.8"/>
<!-- snap icon -->
<path d="M788.4 79 L794.6 72.6 L800.8 79" fill="none" stroke="#b0b0b0" stroke-width="1.3"/>
<path d="M795.6 71.4 L801.4 65.6" fill="none" stroke="#b0b0b0" stroke-width="1.3" stroke-dasharray="1.6 1.2"/>
<path d="M804.2 62.8 L804 68 L799 63 Z"/>
<!-- blue bracket icon -->
<g stroke="#2d8ceb" stroke-width="1.4" fill="none"><path d="M819.4 67.2 L819.4 64 L822.8 64 M830 64 L833.4 64 L833.4 67.2 M833.4 74.4 L833.4 77.6 L830 77.6 M822.8 77.6 L819.4 77.6 L819.4 74.4"/><path d="M823.6 69.8 L823.6 68.2 L825.2 68.2 M827.6 68.2 L829.2 68.2 L829.2 69.8 M829.2 72 L829.2 73.6 L827.6 73.6 M825.2 73.6 L823.6 73.6 L823.6 72" stroke-width="1.2"/></g>
<!-- workspace hamburger -->
<g fill="#2d8ceb"><rect x="1115" y="66.8" width="10.4" height="1.4"/><rect x="1115" y="70.8" width="10.4" height="1.4"/><rect x="1115" y="74.8" width="10.4" height="1.4"/></g>
<!-- >> -->
<path d="M1600.6 65.6 L1604.8 69.6 L1600.6 73.6 M1606.6 65.6 L1610.8 69.6 L1606.6 73.6" fill="none" stroke="#c4c4c4" stroke-width="1.5"/>
<!-- sync settings -->
<rect x="1632.2" y="64.2" width="23.8" height="13.6" rx="2"/>
<g fill="#232323"><circle cx="1639" cy="71" r="3.4"/><path d="M1638.2 66 h1.6 v10 h-1.6z M1634 70.2 h10 v1.6 h-10z M1635 66.6 l1.1 -1.1 l7 7 l-1.1 1.1z M1643 66.6 l-1.1 -1.1 l-7 7 l1.1 1.1z"/></g>
<circle cx="1639" cy="71" r="1.5"/>
<g stroke="#232323" stroke-width="1.3" fill="none"><path d="M1646.4 68.6 L1653 68.6 M1647.6 73.6 L1654 73.6"/></g>
<path d="M1646 68.6 L1648.8 66.2 L1648.8 71 Z M1654.4 73.6 L1651.6 71.2 L1651.6 76 Z" fill="#232323"/>
</g>
<!-- search help -->
<circle cx="1687.4" cy="69.8" r="4.3" fill="none" stroke="#c8c8c8" stroke-width="1.4"/>
<path d="M1684.4 73 L1679 78" stroke="#c8c8c8" stroke-width="1.6" stroke-linecap="round"/>

<!-- ============ PANEL HEADER GLYPHS ============ -->
<g stroke="#9a9a9a" stroke-width="1.1" fill="none">
<path d="M112.4 104.2 L118 109.8 M118 104.2 L112.4 109.8"/>
<path d="M421.2 104 L427 109.8 M427 104 L421.2 109.8"/>
<path d="M179.4 708.8 L185.2 714.6 M185.2 708.8 L179.4 714.6"/>
</g>
<!-- locks (open) -->
<g id="lk1"><rect x="157.8" y="103" width="10.6" height="7.8" rx="1" fill="#b0b0b0"/><path d="M160.2 103 L160.2 100.6 A2.9 2.9 0 0 1 166 100.2" fill="none" stroke="#b0b0b0" stroke-width="1.4"/><rect x="162.4" y="105" width="1.6" height="3.6" fill="#232323"/></g>
<g><rect x="466.2" y="103" width="10.6" height="7.8" rx="1" fill="#b0b0b0"/><path d="M468.6 103 L468.6 100.6 A2.9 2.9 0 0 1 474.4 100.2" fill="none" stroke="#b0b0b0" stroke-width="1.4"/><rect x="470.8" y="105" width="1.6" height="3.6" fill="#232323"/></g>
<!-- hamburgers -->
<g fill="#c4c4c4">
<rect x="327.6" y="102" width="10.6" height="1.5"/><rect x="327.6" y="106" width="10.6" height="1.5"/><rect x="327.6" y="110" width="10.6" height="1.5"/>
<rect x="647" y="102" width="10.4" height="1.5"/><rect x="647" y="106" width="10.4" height="1.5"/><rect x="647" y="110" width="10.4" height="1.5"/>
<rect x="1880" y="215.6" width="10.2" height="1.5"/><rect x="1880" y="219.7" width="10.2" height="1.5"/><rect x="1880" y="223.8" width="10.2" height="1.5"/>
<rect x="299.8" y="707" width="10.4" height="1.5"/><rect x="299.8" y="711" width="10.4" height="1.5"/><rect x="299.8" y="715" width="10.4" height="1.5"/>
</g>
<!-- breadcrumbs chevrons -->
<path d="M535.4 132.8 L530.6 137 L535.4 141.2" fill="none" stroke="#c0c0c0" stroke-width="1.5"/>
<path d="M640.4 132.8 L635.6 137 L640.4 141.2" fill="none" stroke="#2d8ceb" stroke-width="1.6"/>
<!-- effects search magnifier -->
<circle cx="1670.6" cy="250.6" r="4" fill="none" stroke="#c8c8c8" stroke-width="1.3"/>
<path d="M1667.8 253.6 L1662 258.8" stroke="#c8c8c8" stroke-width="1.4" stroke-linecap="round"/>
<path d="M1675.8 254.4 L1682.6 254.4 L1679.2 257.8 Z" fill="#c8c8c8"/>
<!-- timeline search magnifier -->
<circle cx="151.4" cy="746.8" r="4" fill="none" stroke="#c8c8c8" stroke-width="1.3"/>
<path d="M148.6 749.8 L143 755.2" stroke="#c8c8c8" stroke-width="1.4" stroke-linecap="round"/>
<path d="M156.8 750.8 L163.6 750.8 L160.2 754.2 Z" fill="#c8c8c8"/>
<!-- scrollbar top point -->

<!-- ============ COMP FOOTER ============ -->
<g fill="#b0b0b0">
<!-- always preview -->
<rect x="414.8" y="666" width="11" height="8.6" rx="1"/>
<path d="M418.6 667.8 L422.8 670.3 L418.6 672.8 Z" fill="#232323"/>
<path d="M428.4 668.6 L428.4 676.6 L418 676.6 M430.6 670.8 L430.6 678.8 L420.2 678.8" fill="none" stroke="#8e8e8e" stroke-width="1.1"/>
<!-- monitor -->
<rect x="442.6" y="665.8" width="14.4" height="9.4" fill="none" stroke="#a8a8a8" stroke-width="1.2"/>
<path d="M448.2 675.6 h3.4 v1.6 h-3.4z M445.2 677.4 h9.4 v1.3 h-9.4z" fill="#a8a8a8"/>
<!-- mask/VR goggles -->
<path d="M469.6 665.8 L484.4 665.8 C486.4 665.8 487 668 487 671.4 C487 675 485.8 677 483.6 677 C481 677 479.6 674.2 477 674.2 C474.4 674.2 473 677 470.4 677 C468.2 677 467 675 467 671.4 C467 668 467.6 665.8 469.6 665.8 Z"/>
<circle cx="472" cy="670.6" r="2.3" fill="#232323"/><circle cx="482" cy="670.6" r="2.3" fill="#232323"/>
<path d="M480 679.6 L485.4 679.6 L482.7 682.6 Z"/>
<!-- zoom chevron -->
<path d="M561.8 671.4 L566.4 675.6 L571 671.4" fill="none" stroke="#b0b0b0" stroke-width="1.4"/>
<!-- region of interest -->
<g stroke="#b0b0b0" stroke-width="1.2" fill="none"><rect x="584.6" y="666" width="14.6" height="10.4"/><path d="M591.9 664.2 L591.9 668.6 M591.9 674 L591.9 678.2 M582.6 671.2 L587 671.2 M596.8 671.2 L601.2 671.2"/></g>
<rect x="590.9" y="670.2" width="2" height="2"/>
<path d="M595 680 L600.4 680 L597.7 683 Z"/>
<!-- mask toggle blue -->
<path d="M612 673 L618.5 666.4 L627.7 666.4 L627.7 679.6 L612 679.6 Z" fill="none" stroke="#2d8ceb" stroke-width="1.4"/>
<g fill="#2d8ceb"><circle cx="612" cy="673" r="1.5"/><circle cx="618.5" cy="666.4" r="1.5"/><circle cx="627.7" cy="666.4" r="1.5"/><circle cx="627.7" cy="673" r="1.3"/><circle cx="627.7" cy="679.6" r="1.5"/><circle cx="612" cy="679.6" r="1.5"/></g>
<!-- camera -->
<path d="M726.4 668.6 L730.4 668.6 L731.8 666.2 L738.2 666.2 L739.6 668.6 L743.6 668.6 L743.6 680 L726.4 680 Z"/>
<circle cx="735" cy="674" r="3.4" fill="#232323"/><circle cx="735" cy="674" r="1.8"/>
<!-- show snapshot (dim) -->
<g fill="#3c3c3c"><path d="M752.6 674.4 C755 670.6 758 669.4 760.4 669.4 C763 669.4 766 670.6 768.4 674.4 C766 678.2 763 679.4 760.4 679.4 C758 679.4 755 678.2 752.6 674.4 Z"/><path d="M762 666.8 L764 666.8 L764.8 665.6 L768 665.6 L768.8 666.8 L770.6 666.8 L770.6 672 L768 670 L762 669 Z"/></g>
<circle cx="760.4" cy="674.4" r="2.6" fill="#232323"/>
<!-- rgb -->
<circle cx="789.6" cy="668.2" r="3.7" fill="#f01414"/><circle cx="786" cy="673.8" r="3.7" fill="#14b414"/><circle cx="793.2" cy="673.8" r="3.7" fill="#3c6cf0"/>
<path d="M792.6 679.8 L798 679.8 L795.3 682.8 Z"/>
<!-- half chevron -->
<path d="M895.6 671.4 L900.3 675.6 L905 671.4" fill="none" stroke="#b0b0b0" stroke-width="1.4"/>
<!-- fast preview region box -->
<rect x="918.2" y="666" width="16.4" height="13.6" rx="1" fill="none" stroke="#b0b0b0" stroke-width="1.3"/>
<rect x="923" y="671" width="8.2" height="5.6"/>
<!-- transparency grid blue -->
<rect x="945.6" y="667.4" width="16.2" height="12.4" fill="#163a5e" stroke="#2d8ceb" stroke-width="1.3"/>
<g fill="#2d8ceb"><rect x="946.4" y="668" width="3.6" height="3.6"/><rect x="953.8" y="668" width="3.6" height="3.6"/><rect x="950" y="671.8" width="3.8" height="3.8"/><rect x="957.4" y="671.8" width="3.8" height="3.8"/><rect x="946.4" y="675.6" width="3.6" height="3.6"/><rect x="953.8" y="675.6" width="3.6" height="3.6"/></g>
<!-- chevrons -->
<path d="M1083.2 671.4 L1087.8 675.6 L1092.4 671.4" fill="none" stroke="#b0b0b0" stroke-width="1.4"/>
<path d="M1173 671.4 L1177.6 675.6 L1182.2 671.4" fill="none" stroke="#b0b0b0" stroke-width="1.4"/>
<!-- pixel aspect blue -->
<g stroke="#2d8ceb" stroke-width="1.4" fill="none"><path d="M1196.4 668.8 L1212 668.8"/><rect x="1199.6" y="674.8" width="9" height="5.4"/></g>
<path d="M1194 668.8 L1197.8 665.8 L1197.8 671.8 Z M1214.4 668.8 L1210.6 665.8 L1210.6 671.8 Z" fill="#2d8ceb"/>
<!-- fast previews -->
<path d="M1238.6 675 L1238.6 666 L1223.2 666 L1223.2 680 L1233.6 680" fill="none" stroke="#b0b0b0" stroke-width="1.3"/>
<path d="M1232.6 667.4 L1228 673.4 L1230.8 673.4 L1228.8 678.4 L1234.4 671.6 L1231.4 671.6 L1233.6 667.4 Z"/>
<path d="M1234.6 677.4 L1240.6 677.4 L1237.6 680.6 Z"/>
<!-- timeline button -->
<path d="M1251.6 667.6 L1251.6 677 L1266.8 677 L1266.8 667.6" fill="none" stroke="#b0b0b0" stroke-width="1.2"/>
<rect x="1256" y="665" width="6.4" height="4.4"/>
<path d="M1255 672 v5 M1259.2 669 v8 M1263.4 672 v5" stroke="#b0b0b0" stroke-width="1.2" fill="none"/>
<!-- flowchart -->
<rect x="1282.6" y="665" width="6.6" height="4.4"/><rect x="1277.8" y="675.6" width="6.2" height="5"/><rect x="1287.8" y="675.6" width="6.2" height="5"/>
<path d="M1285.9 669.4 V672.6 M1280.9 675.6 V672.6 H1290.9 V675.6" fill="none" stroke="#b0b0b0" stroke-width="1.2"/>
<!-- exposure aperture -->
<circle cx="1316" cy="672.8" r="6.2" fill="none" stroke="#a4a4a4" stroke-width="3.6"/>
<g stroke="#232323" stroke-width="1.1"><path d="M1316 664.6 L1319.4 670.6 M1323.2 668.8 L1318.8 674.2 M1323 677 L1316.4 675.8 M1316 681 L1312.6 675 M1308.8 676.8 L1313.2 671.4 M1309 668.6 L1315.6 669.8"/></g>
</g>

<!-- ============ TIMELINE ICONS ============ -->
<defs>
<g id="eye"><path d="M0 0 C2.4 -3.6 5 -4.5 7.1 -4.5 C9.2 -4.5 11.8 -3.6 14.2 0 C11.8 3.6 9.2 4.5 7.1 4.5 C5 4.5 2.4 3.6 0 0 Z"/><circle cx="7.2" cy="-0.2" r="3" fill="#262626"/><circle cx="8" cy="-1.2" r="0.8" fill="#777"/></g>
<g id="shy"><path d="M2.2 8.9 L2.2 6 A5.8 5.8 0 0 1 13.8 6 L13.8 8.9 L9.6 8.9 L9.6 11.4 L8 12.6 L6.4 11.4 L6.4 8.9 Z"/><circle cx="5.5" cy="4.6" r="1.25" fill="#262626"/><circle cx="10.3" cy="4.6" r="1.25" fill="#262626"/><rect x="0" y="9.4" width="5" height="1.5"/><rect x="10.8" y="9.4" width="5" height="1.5"/></g>
<g id="star"><g stroke-width="1.2"><path d="M0 -6.5 V6.5 M-6.5 0 H6.5 M-4.3 -4.3 L4.3 4.3 M4.3 -4.3 L-4.3 4.3"/></g><circle r="2.6"/><circle r="1.1" fill="#262626" stroke="none"/></g>
<g id="cube" fill="none" stroke-width="1.15" stroke-linejoin="round"><path d="M7.4 0.4 L14.4 3.6 L14.4 10.6 L7.4 14 L0.4 10.6 L0.4 3.6 Z"/><path d="M0.4 3.6 L7.4 7 L14.4 3.6 M7.4 7 L7.4 14"/></g>
<g id="whip" fill="none" stroke-width="1.2"><path d="M5.6 2.4 A6.6 6.6 0 1 0 13.2 6.4 A4.6 4.6 0 1 0 8.6 11.4 A2.6 2.6 0 1 0 6.4 7.6" /></g>
<g id="sw"><circle cx="0" cy="1.2" r="6.4" fill="none" stroke-width="1.4"/><path d="M-2 -6.4 H2 M0 -6.4 V-4.6" stroke-width="1.5" fill="none"/></g>
</defs>
<g fill="#b0b0b0" stroke="none">
<!-- header controls -->
<g><rect x="436.4" y="742.4" width="5" height="3.4"/><rect x="449.8" y="742.4" width="5.4" height="3.4"/><rect x="449.8" y="750" width="5.4" height="3.4"/><path d="M441 744.1 H450 M446.6 744.1 V751.7 H450" stroke="#b0b0b0" stroke-width="1.1" fill="none"/><path d="M451.6 755.6 L457 755.6 L454.3 758.6 Z"/></g>
<g stroke="#b0b0b0" stroke-width="1.1"><path d="M482 738.6 V750.6 M476 744.6 H488 M477.8 740.4 L486.2 748.8 M486.2 740.4 L477.8 748.8"/></g>
<circle cx="482" cy="744.6" r="2.2"/>
<path d="M484.6 749 L491.2 745.8 L497.8 749 L497.8 756.2 L491.2 759.4 L484.6 756.2 Z" fill="#232323"/>
<use href="#cube" x="484.2" y="745.4" stroke="#b0b0b0" transform="translate(484.2 745.4) scale(0.95) translate(-484.2 -745.4)"/>
<!-- shy big -->
<rect x="520.2" y="751.4" width="20.6" height="5.6" fill="#7e7e7e"/>
<path d="M523 751.4 A7.6 7.6 0 0 1 538.2 751.4 L532.4 751.4 L532.4 755 L530.6 756.2 L528.8 755 L528.8 751.4 Z"/>
<circle cx="527.4" cy="747.4" r="1.5" fill="#232323"/><circle cx="533.8" cy="747.4" r="1.5" fill="#232323"/>
<path d="M520.6 750.2 h2.4 v1.2 h-2.4z M538.2 750.2 h2.4 v1.2 h-2.4z"/>
<!-- frame blend -->
<path d="M554.6 745 L554.6 758 L566.6 758" fill="none" stroke="#8e8e8e" stroke-width="1.3"/>
<path d="M556.8 745 L556.8 756 L568.4 756" fill="none" stroke="#a0a0a0" stroke-width="1.2"/>
<rect x="559.4" y="741.2" width="12.2" height="13.6" rx="0.8"/>
<g fill="#232323"><rect x="560.4" y="742.6" width="1.3" height="1.5"/><rect x="560.4" y="745.6" width="1.3" height="1.5"/><rect x="560.4" y="748.6" width="1.3" height="1.5"/><rect x="560.4" y="751.6" width="1.3" height="1.5"/><rect x="569.3" y="742.6" width="1.3" height="1.5"/><rect x="569.3" y="745.6" width="1.3" height="1.5"/><rect x="569.3" y="748.6" width="1.3" height="1.5"/><rect x="569.3" y="751.6" width="1.3" height="1.5"/><rect x="563.2" y="747" width="4.6" height="1.2"/></g>
<!-- motion blur blue -->
<g stroke="#2d8ceb" stroke-width="1.4" fill="none"><path d="M589.4 747 A6.3 6.3 0 0 0 599.6 757.6"/><path d="M591.6 745 A6.3 6.3 0 0 0 601.8 755.6"/><path d="M587.6 749.4 A6.3 6.3 0 0 0 597.4 759.4" opacity="0"/><circle cx="598.2" cy="747.2" r="6.2" fill="#1c5796"/></g>
<!-- graph editor -->
<g stroke="#b0b0b0" stroke-width="1.2" fill="none"><rect x="629.4" y="742.6" width="17.8" height="15.2"/><path d="M633 742.6 V739.8 M637.4 742.6 V739.8 M641.8 742.6 V739.8 M645.6 742.6 V739.8 M629.4 746.4 H627.4 M629.4 750.4 H627.4 M629.4 754.4 H627.4"/><path d="M631 744.6 C638 744.6 637.6 755.6 645 755.6"/></g>
<!-- column header -->
<use href="#eye" x="8.8" y="785.6"/>
<path d="M27 781.4 L30 781.4 L33.8 777.8 L33.8 793 L30 789.6 L27 789.6 Z"/>
<g stroke="#b0b0b0" stroke-width="1.3" fill="none"><path d="M36 781.8 A4.2 4.2 0 0 1 36 789.4"/><path d="M36 778.6 A7.4 7.4 0 0 1 36 792.6"/></g>
<circle cx="53.5" cy="785.6" r="4.6"/>
<rect x="66.8" y="784.2" width="12" height="7.6" rx="0.8"/><path d="M69.6 784.4 V782 A3.2 3.2 0 0 1 76 782 V784.4" fill="none" stroke="#b0b0b0" stroke-width="1.6"/><circle cx="72.8" cy="787" r="1.1" fill="#262626"/><rect x="72.3" y="787" width="1" height="2.8" fill="#262626"/>
<path d="M104 778.6 L110.6 778 L118.8 786.4 L112 793 L104.2 785 Z"/><circle cx="107.2" cy="781.2" r="1.4" fill="#2f2f2f"/>
<use href="#shy" x="336.8" y="778.2"/>
<use href="#star" x="363.4" y="785.5" stroke="#b0b0b0"/>
<g><rect x="375.6" y="778.6" width="2.2" height="2.2"/><rect x="378" y="781" width="2.2" height="2.2"/><rect x="380.4" y="783.4" width="2.2" height="2.2"/><rect x="382.8" y="785.8" width="2.2" height="2.2"/><rect x="385.2" y="788.2" width="2.2" height="2.2"/></g>
<!-- film small -->
<path d="M411.6 780 L411.6 792 L424 792" fill="none" stroke="#8e8e8e" stroke-width="1.2"/>
<rect x="413.8" y="778" width="13.2" height="12" rx="0.8"/>
<g fill="#2f2f2f"><rect x="414.8" y="779.4" width="1.2" height="1.4"/><rect x="414.8" y="782.2" width="1.2" height="1.4"/><rect x="414.8" y="785" width="1.2" height="1.4"/><rect x="414.8" y="787.8" width="1.2" height="1.4"/><rect x="424.8" y="779.4" width="1.2" height="1.4"/><rect x="424.8" y="782.2" width="1.2" height="1.4"/><rect x="424.8" y="785" width="1.2" height="1.4"/><rect x="424.8" y="787.8" width="1.2" height="1.4"/><rect x="417.6" y="783.4" width="5.6" height="1.2"/></g>
<!-- motion blur small -->
<g stroke="#b0b0b0" stroke-width="1.2" fill="none"><path d="M433 784.4 A5.6 5.6 0 0 0 442 793.2"/><path d="M435 782.4 A5.6 5.6 0 0 0 444.4 791"/><circle cx="441" cy="783.8" r="5.5" fill="#686868"/></g>
<!-- adjustment -->
<circle cx="457.5" cy="785.6" r="6" fill="none" stroke="#b0b0b0" stroke-width="1.2"/>
<path d="M461.9 781.2 A6.2 6.2 0 0 1 453.1 790 Z"/>
<use href="#cube" x="468" y="778.4" stroke="#b0b0b0"/>
</g>
<!-- fx italic text drawn as svg text -->
<text x="392.6" y="790.6" font-family="Liberation Serif, serif" font-style="italic" font-size="16.5" fill="#b0b0b0" textLength="15" lengthAdjust="spacingAndGlyphs">fx</text>
<!-- layer row -->
<g fill="#d8d8d8" stroke="none">
<use href="#eye" x="8.8" y="806.4"/>
</g>
<g fill="#b8b8b8">
<use href="#shy" x="336.8" y="799.2"/>
<use href="#star" x="363.4" y="806.4" stroke="#b8b8b8"/>
<rect x="378.8" y="805.4" width="7.4" height="2.2"/><rect x="434.8" y="805.4" width="7.4" height="2.2"/>
<use href="#cube" x="468" y="799.2" stroke="#b8b8b8"/>
<use href="#whip" x="507.6" y="798.6" stroke="#b8b8b8"/>
<use href="#whip" x="524.6" y="820.6" stroke="#b0b0b0"/>
<use href="#whip" x="524.6" y="841.8" stroke="#b0b0b0"/>
<use href="#whip" x="524.6" y="863" stroke="#b0b0b0"/>
<use href="#whip" x="524.6" y="884.2" stroke="#b0b0b0"/>
</g>
<path d="M95 805.8 L99.4 809.8 L103.8 805.8" fill="none" stroke="#b0b0b0" stroke-width="1.3"/>
<path d="M626.8 804.2 L631.6 808.4 L636.4 804.2" fill="none" stroke="#b0b0b0" stroke-width="1.3"/>
<!-- layer source icon -->
<rect x="169.8" y="799.4" width="20.4" height="16" rx="1" fill="#c4c4c4"/>
<rect x="172.6" y="801" width="14.8" height="12.8" fill="#3a3a3a"/>
<g fill="#2b2b2b"><rect x="170.4" y="800.6" width="1.4" height="1.6"/><rect x="170.4" y="803.8" width="1.4" height="1.6"/><rect x="170.4" y="807" width="1.4" height="1.6"/><rect x="170.4" y="810.2" width="1.4" height="1.6"/><rect x="188.2" y="800.6" width="1.4" height="1.6"/><rect x="188.2" y="803.8" width="1.4" height="1.6"/><rect x="188.2" y="807" width="1.4" height="1.6"/><rect x="188.2" y="810.2" width="1.4" height="1.6"/></g>
<circle cx="177" cy="804.6" r="2.6" fill="#3c8cf0"/><rect x="181" y="803.6" width="5.2" height="5.2" fill="#e03c28" transform="rotate(20 183.6 806.2)"/><path d="M179.6 806 L183.6 812.6 L175.6 812.6 Z" fill="#28a83c"/>
<!-- stopwatches -->
<g stroke="#b0b0b0" fill="none"><use href="#sw" x="160.3" y="829.4"/><use href="#sw" x="160.3" y="850.6"/><use href="#sw" x="160.3" y="893"/></g>
<g stroke="#2d8ceb" fill="none"><use href="#sw" x="160.3" y="871.8"/><path d="M160.3 873 L164.4 868.6" stroke-width="1.4"/></g>
<!-- graph icon for Y rotation -->
<path d="M176.6 864 V877.4 H190.6" fill="none" stroke="#b0b0b0" stroke-width="1.4"/>
<path d="M178.6 872.4 L181.2 868 L184.4 874.2 L188.6 867.4" fill="none" stroke="#b0b0b0" stroke-width="1.1"/>
<!-- tiny dots -->
<g fill="#3a3a3a"><rect x="138.8" y="828.4" width="1.6" height="1.6"/><rect x="138.8" y="849.6" width="1.6" height="1.6"/><rect x="138.8" y="870.8" width="1.6" height="1.6"/><rect x="138.8" y="892" width="1.6" height="1.6"/></g>
<!-- keyframe navigator -->
<path d="M19 865.8 L19 876.2 L11.2 871 Z" fill="#c0c0c0"/>
<path d="M50.2 865.8 L50.2 876.2 L58 871 Z" fill="#c0c0c0"/>
<path d="M34.4 865.8 L39.6 871 L34.4 876.2 L29.2 871 Z" fill="#232323" stroke="#b0b0b0" stroke-width="1.1"/>
<!-- I-beams -->
<g stroke="#c4c4c4" stroke-width="1.3" fill="none">
<path d="M851.4 823.4 H854.6 M857.2 823.4 H860.2 M851.4 835.4 H854.6 M857.2 835.4 H860.2 M857 823.4 V835.4"/>
<path d="M851.4 844.6 H854.6 M857.2 844.6 H860.2 M851.4 856.6 H854.6 M857.2 856.6 H860.2 M857 844.6 V856.6"/>
<path d="M851.4 887 H854.6 M857.2 887 H860.2 M851.4 899 H854.6 M857.2 899 H860.2 M857 887 V899"/>
</g>
<!-- hourglass keyframe -->
<path d="M1480.4 866.4 L1490.8 866.4 L1487.2 871 L1490.8 875.8 L1480.4 875.8 L1484 871 Z" fill="#b0b0b0"/>
<path d="M1485.6 866.4 L1490.8 866.4 L1487.2 871 L1490.8 875.8 L1485.6 875.8 Z" fill="#d8d8d8"/>
<!-- playhead handle -->
<path d="M848.2 753.6 L862.4 753.6 L862.4 761.4 L855.6 770.6 L855.2 770.6 L848.2 761.4 Z" fill="#2d8ceb"/>
<path d="M853.6 762.2 H857.4 M855.5 762.2 V769" stroke="#1a4f86" stroke-width="1" fill="none"/>
<!-- right markers -->
<path d="M1902.6 774.6 L1916 774.6 L1916 786 L1909.3 792 L1902.6 786 Z" fill="#b0b0b0"/>
<rect x="1906" y="802.6" width="10" height="9" fill="#b0b0b0"/>
<path d="M1898.6 810 L1908.6 810 L1906.6 800 Z" fill="#232323" stroke="#b0b0b0" stroke-width="1.1" stroke-linejoin="round"/>
<circle cx="1904.6" cy="811.6" r="3" fill="#232323" stroke="#c8c8c8" stroke-width="1.3"/>
<!-- layer bar corner marks -->
<path d="M678.4 798.6 L678.4 803 A4.4 4.4 0 0 1 682.8 798.6 Z" fill="#3f3a33"/>
<path d="M1886.4 798.6 L1886.4 803 A4.4 4.4 0 0 0 1882 798.6 Z" fill="#3f3a33"/>
<!-- bottom-left icons -->
<rect x="6.4" y="1009.2" width="20" height="18" fill="none" stroke="#2e2e2e" stroke-width="1"/>
<g stroke="#2d8ceb" stroke-width="1.3" fill="#232323"><rect x="10.6" y="1013" width="8" height="8" rx="1"/><rect x="13.4" y="1015.8" width="8" height="8" rx="1"/><rect x="16.4" y="1018.6" width="8" height="8" rx="1"/></g><circle cx="20.4" cy="1022.6" r="1.3" fill="#2d8ceb"/>
<circle cx="37.6" cy="1017.4" r="4.8" fill="none" stroke="#b0b0b0" stroke-width="1.2"/><rect x="38.6" y="1018.4" width="8" height="8" fill="#232323" stroke="#b0b0b0" stroke-width="1.2"/><path d="M38.6 1018.4 h3.6 v3.4 h-3.6z" fill="#8a8a8a"/>
<rect x="59.4" y="1012.4" width="6.4" height="13.4" fill="#7a7a7a"/>
<path d="M60.4 1012.4 C58.6 1012.4 58.6 1014 58.6 1015.6 C58.6 1017.4 57.4 1018.6 55.4 1019.2 C57.4 1019.8 58.6 1021 58.6 1022.8 C58.6 1024.4 58.6 1026 60.4 1026 M64.8 1012.4 C66.6 1012.4 66.6 1014 66.6 1015.6 C66.6 1017.4 67.8 1018.6 69.8 1019.2 C67.8 1019.8 66.6 1021 66.6 1022.8 C66.6 1024.4 66.6 1026 64.8 1026" fill="none" stroke="#c0c0c0" stroke-width="1.6"/>
<!-- zoom slider -->
<path d="M675.8 1020 L679.4 1016.6 L681.4 1018.4 L684 1015 L687.6 1020 Z" fill="#b0b0b0"/>
<rect x="712" y="1016.4" width="49" height="2.4" rx="1.2" fill="#444"/>
<circle cx="707" cy="1019.2" r="4.8" fill="#232323" stroke="#8c8c8c" stroke-width="2"/>
<path d="M776.4 1022.6 L781.6 1016.4 L784 1016.4 L779 1022.6 Z M780.6 1022.6 L789 1013.8 L797.2 1022.6 Z" fill="#b0b0b0"/>

<defs>
<filter id="vb" x="-20%" y="-10%" width="140%" height="120%"><feGaussianBlur stdDeviation="0.5 5.5"/></filter>
<filter id="vb2" x="-30%" y="-10%" width="160%" height="120%"><feGaussianBlur stdDeviation="2.6 5.2"/></filter>
<filter id="vb3" x="-30%" y="-10%" width="160%" height="120%"><feGaussianBlur stdDeviation="1 5"/></filter>
<linearGradient id="rb" x1="0" x2="1" y1="0" y2="0"><stop offset="0" stop-color="#bd0000" stop-opacity="0.6"/><stop offset="0.4" stop-color="#bd0000" stop-opacity="0.8"/><stop offset="0.62" stop-color="#bd0000" stop-opacity="1"/><stop offset="1" stop-color="#bd0000" stop-opacity="1"/></linearGradient>
<linearGradient id="fz" x1="0" x2="1" y1="0" y2="0"><stop offset="0" stop-color="#bd0000" stop-opacity="0.9"/><stop offset="0.55" stop-color="#bd0000" stop-opacity="0.75"/><stop offset="1" stop-color="#bd0000" stop-opacity="0.32"/></linearGradient>
<linearGradient id="wl" x1="0" x2="0" y1="0" y2="1"><stop offset="0" stop-color="#fff" stop-opacity="0"/><stop offset="0.06" stop-color="#fff" stop-opacity="0.35"/><stop offset="0.11" stop-color="#fff" stop-opacity="1"/><stop offset="0.97" stop-color="#fff" stop-opacity="1"/><stop offset="1" stop-color="#fff" stop-opacity="0"/></linearGradient>
<clipPath id="cv"><rect x="584" y="160" width="878" height="494"/></clipPath>
<clipPath id="lc"><path d="M991.9 270 L1070 270 L1070 560 L987.8 560 L988.3 522 Z"/></clipPath>
</defs>
<g clip-path="url(#cv)">
<g clip-path="url(#lc)">
<g filter="url(#vb)">
<rect x="975" y="300" width="59" height="44" fill="url(#fz)" opacity="0.5"/>
<rect x="975" y="344" width="59" height="182" fill="url(#fz)" opacity="0.76"/>
<rect x="1039.6" y="300" width="11.2" height="34" fill="url(#rb)" opacity="0.7"/>
<rect x="1039.6" y="334" width="11.2" height="192" fill="url(#rb)"/>
<rect x="1036.9" y="304" width="2.8" height="222" fill="#bd0000" opacity="0.68"/>
</g>
<g filter="url(#vb2)">
<path d="M965 299 L993 299 L1016 325 C1021.5 329.5 1024 338 1025 345 C1026 352 1027 358 1027 365 C1028.5 385 1031 400 1031 415 L1031 495 C1031 505 1028 513 1023 518.5 C1017 525 1011 527 1006 528 L965 528 Z" fill="#bd0000"/>
</g>
</g>
<rect x="1032.4" y="292" width="1" height="240" fill="#8a5a5a" opacity="0.25"/>
<rect x="1035" y="277" width="1.8" height="258" fill="url(#wl)"/>

</g>

</svg>
</div>
</body></html>
